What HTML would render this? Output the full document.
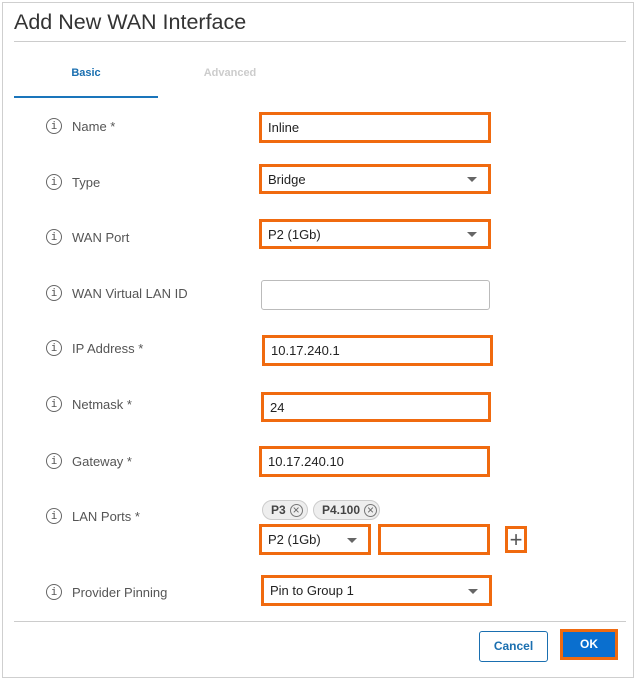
<!DOCTYPE html>
<html><head><style>
*{box-sizing:border-box;margin:0;padding:0}
body{width:638px;height:680px;background:#fff;font-family:"Liberation Sans",sans-serif;position:relative;overflow:hidden;color:#333}
.a{position:absolute}
.frame{left:2px;top:2px;width:632px;height:676px;border:1px solid #cfcfcf}
.ob{position:absolute;border:3px solid #f06a0f;background:#fff;font-size:13px;color:#222;padding-left:6px;display:flex;align-items:center}
.car{position:absolute;right:11px;top:50%;margin-top:-2px;width:0;height:0;border-left:5px solid transparent;border-right:5px solid transparent;border-top:5px solid #666}
.lab{position:absolute;left:46px;font-size:13px;color:#555;display:flex;align-items:center;height:18px}
.ic{width:16px;height:16px;border:1.5px solid #666;border-radius:50%;margin-right:10px;font-family:"DejaVu Sans Mono",monospace;font-size:11px;color:#555;text-align:center;line-height:13px}
.chip{position:absolute;top:500px;height:20px;border:1px solid #ccc;border-radius:10px;background:#eee;font-size:12px;font-weight:bold;color:#444;display:flex;align-items:center;padding-left:8px}
.x{width:13px;height:13px;border:1px solid #777;border-radius:50%;font-size:12px;line-height:11px;text-align:center;margin-left:4px;color:#666;font-weight:normal}
</style></head><body>
<div class="a frame"></div>
<div class="a" style="left:14px;top:10px;font-size:21.5px;color:#333">Add New WAN Interface</div>
<div class="a" style="left:14px;top:41px;width:612px;height:1px;background:#ccc"></div>
<div class="a" style="left:14px;top:67px;width:144px;text-align:center;font-size:11px;font-weight:bold;color:#1a6fb0">Basic</div>
<div class="a" style="left:158px;top:67px;width:144px;text-align:center;font-size:11px;font-weight:bold;color:#ccc">Advanced</div>
<div class="a" style="left:14px;top:96px;width:144px;height:2px;background:#1a75bb"></div>

<div class="lab" style="top:117px"><div class="ic">i</div>Name *</div>
<div class="lab" style="top:173px"><div class="ic">i</div>Type</div>
<div class="lab" style="top:228px"><div class="ic">i</div>WAN Port</div>
<div class="lab" style="top:284px"><div class="ic">i</div>WAN Virtual LAN ID</div>
<div class="lab" style="top:339px"><div class="ic">i</div>IP Address *</div>
<div class="lab" style="top:395px"><div class="ic">i</div>Netmask *</div>
<div class="lab" style="top:452px"><div class="ic">i</div>Gateway *</div>
<div class="lab" style="top:507px"><div class="ic">i</div>LAN Ports *</div>
<div class="lab" style="top:583px"><div class="ic">i</div>Provider Pinning</div>

<div class="ob" style="left:259px;top:112px;width:232px;height:31px">Inline</div>
<div class="ob" style="left:259px;top:164px;width:232px;height:30px">Bridge<div class="car"></div></div>
<div class="ob" style="left:259px;top:219px;width:232px;height:30px">P2 (1Gb)<div class="car"></div></div>
<div class="a" style="left:261px;top:280px;width:229px;height:30px;border:1px solid #bbb;border-radius:3px"></div>
<div class="ob" style="left:262px;top:335px;width:231px;height:31px">10.17.240.1</div>
<div class="ob" style="left:261px;top:392px;width:230px;height:30px">24</div>
<div class="ob" style="left:259px;top:446px;width:231px;height:31px">10.17.240.10</div>
<div class="chip" style="left:262px;width:46px">P3<div class="x">×</div></div>
<div class="chip" style="left:313px;width:67px">P4.100<div class="x">×</div></div>
<div class="ob" style="left:259px;top:524px;width:112px;height:31px">P2 (1Gb)<div class="car"></div></div>
<div class="ob" style="left:378px;top:524px;width:112px;height:31px"></div>
<div class="ob" style="left:505px;top:526px;width:22px;height:27px;padding:0;justify-content:center;font-size:22px;color:#555;font-weight:normal">+</div>
<div class="ob" style="left:261px;top:575px;width:231px;height:31px">Pin to Group 1<div class="car"></div></div>

<div class="a" style="left:14px;top:621px;width:612px;height:1px;background:#ccc"></div>
<div class="a" style="left:479px;top:631px;width:69px;height:31px;border:1px solid #1a6fb0;border-radius:3px;color:#1a6fb0;font-size:12px;font-weight:bold;text-align:center;line-height:29px">Cancel</div>
<div class="a" style="left:560px;top:629px;width:58px;height:31px;border:3px solid #f06a0f;background:#0a6fcf;color:#fff;font-size:12px;font-weight:bold;text-align:center;line-height:25px">OK</div>
</body></html>
